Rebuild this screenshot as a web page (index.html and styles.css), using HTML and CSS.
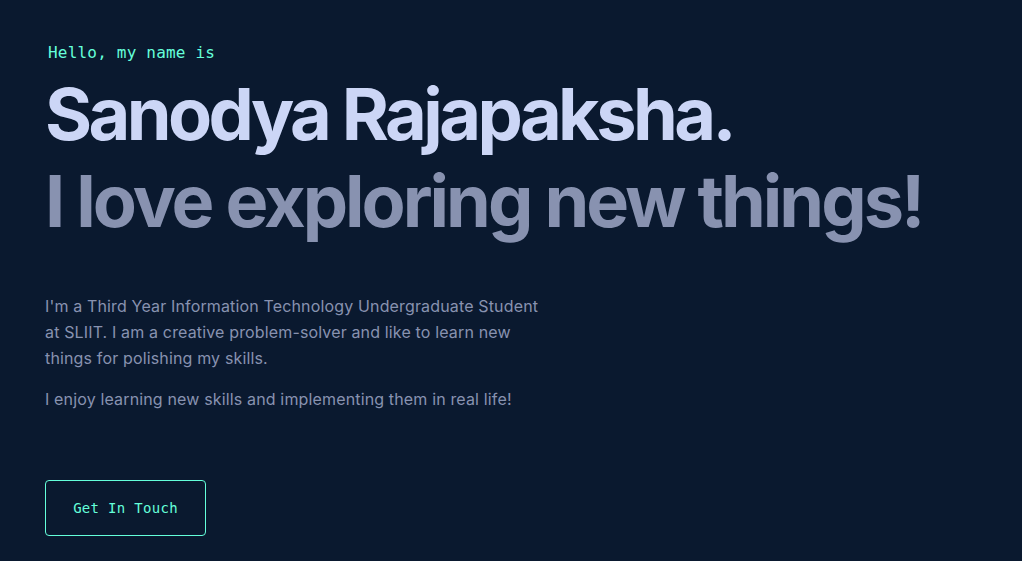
FILE: index.html
```html
<!DOCTYPE html>
<html lang="en">
<head>
<meta charset="utf-8">
<title>Sanodya Rajapaksha</title>
<link rel="stylesheet" href="styles.css">
</head>
<body>
<main class="page">
  <section class="hero">
    <p class="hello">Hello, my name is</p>
    <h1 class="name">Sanodya Rajapaksha.</h1>
    <h2 class="tagline">I love exploring new things!</h2>
    <div class="about">
      <p>I'm a Third Year Information Technology Undergraduate Student at SLIIT. I am a creative problem-solver and like to learn new things for polishing my skills.</p>
      <p>I enjoy learning new skills and implementing them in real life!</p>
    </div>
    <a class="cta" href="#contact">Get In Touch</a>
  </section>
</main>
</body>
</html>
```
FILE: styles.css
```css
html, body {
  margin: 0;
  padding: 0;
  background: #0a192f;
}
body {
  font-family: "Inter", "Liberation Sans", sans-serif;
  color: #8892b0;
  height: 561px;
  overflow: hidden;
}
.page {
  padding: 0 45px;
}
.hero {
  display: flex;
  flex-direction: column;
  align-items: flex-start;
  padding-top: 42px;
}
.hello {
  margin: 0 0 0 3px;
  font-family: "DejaVu Sans Mono", monospace;
  font-size: 16px;
  letter-spacing: 0.2px;
  line-height: 22px;
  color: #64ffda;
}
.name, .tagline {
  margin: 0;
  font-size: 72px;
  font-weight: 700;
  line-height: 87px;
  letter-spacing: -3px;
  white-space: nowrap;
}
.name {
  color: #ccd6f6;
  margin-top: 6px;
  letter-spacing: -3.6px;
}
.tagline {
  color: #8892b0;
}
.about {
  max-width: 500px;
  margin-top: 49px;
}
.about p {
  margin: 0 0 15px;
  font-size: 16px;
  letter-spacing: 0.15px;
  line-height: 26px;
  color: #8892b0;
}
.cta {
  margin-top: 53px;
  display: flex;
  align-items: center;
  justify-content: center;
  box-sizing: border-box;
  width: 161px;
  height: 56px;
  border: 1px solid #64ffda;
  border-radius: 4px;
  color: #64ffda;
  text-decoration: none;
  font-family: "DejaVu Sans Mono", monospace;
  font-size: 14px;
  letter-spacing: 0.3px;
}
```
